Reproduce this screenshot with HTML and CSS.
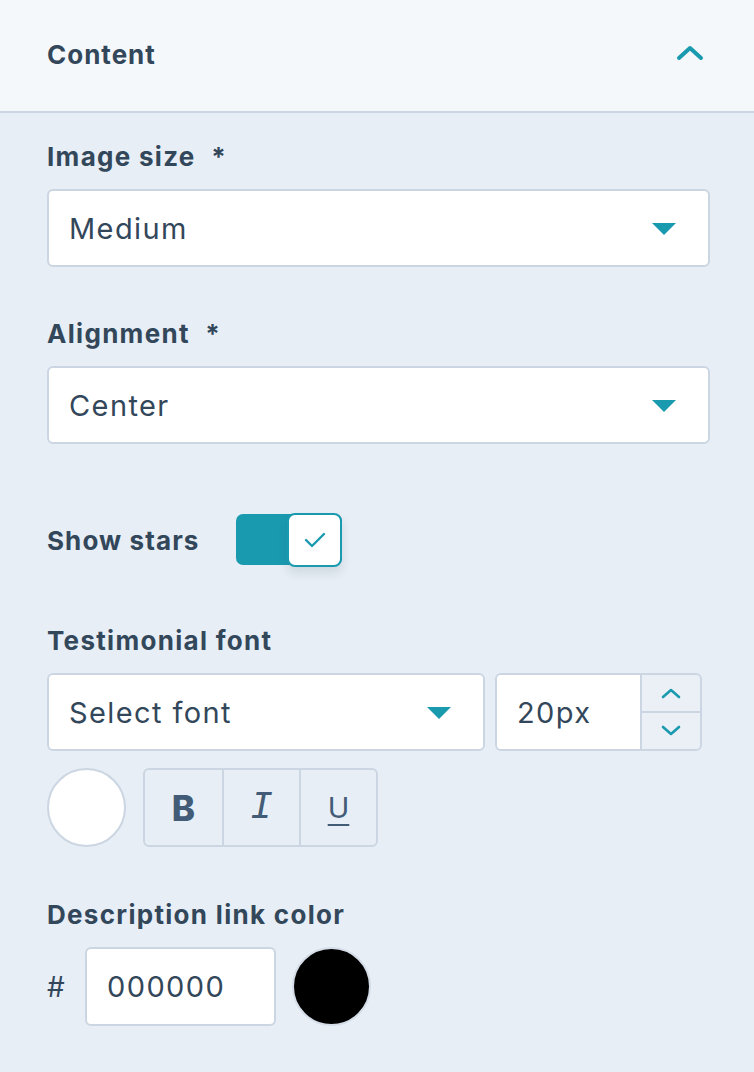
FILE: index.html
```html
<!DOCTYPE html>
<html lang="en">
<head>
<meta charset="utf-8">
<title>Content</title>
<link rel="stylesheet" href="styles.css">
</head>
<body>
<section class="panel">
  <header class="panel-head">
    <h2 class="panel-title">Content</h2>
    <svg class="chev-up" width="28" height="16" viewBox="0 0 28 16"><path d="M3 13 L14 3 L25 13" fill="none" stroke="#1a9aaf" stroke-width="4" stroke-linecap="round" stroke-linejoin="round"/></svg>
  </header>

  <div class="panel-body">
    <div class="field f-size">
      <label class="label">Image size <span class="req">*</span></label>
      <div class="select">
        <span class="select-value">Medium</span>
        <span class="caret"></span>
      </div>
    </div>

    <div class="field f-align">
      <label class="label">Alignment <span class="req">*</span></label>
      <div class="select">
        <span class="select-value">Center</span>
        <span class="caret"></span>
      </div>
    </div>

    <div class="toggle-row">
      <span class="label">Show stars</span>
      <div class="toggle">
        <span class="toggle-knob">
          <svg width="24" height="18" viewBox="0 0 24 18"><path d="M3 9 L9 15 L21 3" fill="none" stroke="#1a9aaf" stroke-width="2.4" stroke-linecap="round" stroke-linejoin="round"/></svg>
        </span>
      </div>
    </div>

    <div class="field f-font">
      <label class="label">Testimonial font</label>
      <div class="font-row">
        <div class="select font-select">
          <span class="select-value">Select font</span>
          <span class="caret"></span>
        </div>
        <div class="number">
          <span class="number-value">20px</span>
          <div class="stepper">
            <span class="step">
              <svg width="22" height="12" viewBox="0 0 22 12"><path d="M3 10 L11 3 L19 10" fill="none" stroke="#1a9aaf" stroke-width="2.6" stroke-linecap="round" stroke-linejoin="round"/></svg>
            </span>
            <span class="step">
              <svg width="22" height="12" viewBox="0 0 22 12"><path d="M3 2 L11 9 L19 2" fill="none" stroke="#1a9aaf" stroke-width="2.6" stroke-linecap="round" stroke-linejoin="round"/></svg>
            </span>
          </div>
        </div>
      </div>
      <div class="style-row">
        <span class="swatch swatch-white"></span>
        <div class="btn-group">
          <span class="btn btn-bold">B</span>
          <span class="btn btn-italic">I</span>
          <span class="btn btn-under">U</span>
        </div>
      </div>
    </div>

    <div class="field f-link">
      <label class="label">Description link color</label>
      <div class="hex-row">
        <span class="hash">#</span>
        <div class="hex-input">000000</div>
        <span class="swatch swatch-black"></span>
      </div>
    </div>
  </div>
</section>
</body>
</html>
```

FILE: styles.css
```css
* { box-sizing: border-box; }

html, body {
  margin: 0;
  padding: 0;
}

body {
  width: 754px;
  height: 1072px;
  background: #e7eef5;
  font-family: "Inter", "Open Sans", sans-serif;
  color: #33475b;
  overflow: hidden;
}

.panel-head {
  height: 113px;
  background: #f5f8fa;
  border-bottom: 2px solid #cbd6e2;
  display: flex;
  align-items: center;
  justify-content: space-between;
  padding: 0 50px 0 47px;
}

.panel-title {
  margin: 0;
  font-size: 26px;
  font-weight: 700;
  letter-spacing: 1px;
  line-height: 1;
  padding-bottom: 2px;
}

.chev-up { margin-bottom: 6px; }

.panel-body {
  padding: 0 44px 0 47px;
}

.label {
  display: block;
  font-size: 26px;
  font-weight: 700;
  letter-spacing: 1.3px;
  line-height: 34px;
  color: #33475b;
}

.req { margin-left: 8px; }

.field .label { margin-bottom: 15px; }

.f-size { padding-top: 27px; }
.f-align { padding-top: 50px; }
.f-font { padding-top: 58px; }
.f-link { padding-top: 51px; }

.select {
  height: 78px;
  background: #fff;
  border: 2px solid #cbd6e2;
  border-radius: 6px;
  display: flex;
  align-items: center;
  justify-content: space-between;
  padding: 0 32px 0 20px;
}

.select-value {
  font-size: 29px;
  font-weight: 400;
  letter-spacing: 1.4px;
  color: #33475b;
}

.caret {
  width: 0;
  height: 0;
  border-left: 12px solid transparent;
  border-right: 12px solid transparent;
  border-top: 12px solid #1a9aaf;
  margin-top: 2px;
}

.toggle-row {
  display: flex;
  align-items: center;
  margin-top: 68px;
  height: 54px;
}

.toggle-row .label { width: 189px; margin-top: 4px; letter-spacing: 1.1px; }

.toggle {
  width: 106px;
  height: 51px;
  background: #1a9aaf;
  border-radius: 7px;
  position: relative;
  margin-top: 1px;
}

.toggle-knob {
  position: absolute;
  right: 0;
  top: -1px;
  width: 55px;
  height: 54px;
  background: #fff;
  border: 2px solid #1a9aaf;
  border-radius: 8px;
  display: flex;
  align-items: center;
  justify-content: center;
  box-shadow: 0 6px 10px rgba(45, 62, 80, 0.12);
}

.font-row {
  display: flex;
  gap: 10px;
}

.font-select {
  width: 438px;
  padding-right: 32px;
}

.number {
  width: 207px;
  height: 78px;
  border: 2px solid #cbd6e2;
  border-radius: 6px;
  display: flex;
  overflow: hidden;
}

.number-value {
  flex: 1;
  background: #fff;
  font-size: 29px;
  letter-spacing: 1.4px;
  display: flex;
  align-items: center;
  padding-left: 20px;
}

.stepper {
  width: 60px;
  display: flex;
  flex-direction: column;
  border-left: 2px solid #cbd6e2;
  background: #eaf0f6;
}

.step {
  flex: 1;
  display: flex;
  align-items: center;
  justify-content: center;
}

.step + .step { border-top: 2px solid #cbd6e2; }

.style-row {
  display: flex;
  align-items: center;
  gap: 17px;
  margin-top: 17px;
}

.swatch {
  width: 79px;
  height: 79px;
  border-radius: 50%;
  border: 2px solid #cbd6e2;
  flex: none;
}

.swatch-white { background: #fff; }
.swatch-black { background: #000; border-color: #d5dee8; }

.btn-group {
  display: flex;
  height: 79px;
  border: 2px solid #cbd6e2;
  border-radius: 6px;
  overflow: hidden;
}

.btn {
  width: 77px;
  display: flex;
  align-items: center;
  justify-content: center;
  color: #425b76;
  font-size: 35px;
}

.btn + .btn { border-left: 2px solid #cbd6e2; }

.btn-bold { font-weight: 800; }

.btn-italic {
  font-family: "Liberation Mono", monospace;
  font-style: italic;
  font-weight: 400;
  font-size: 38px;
}

.btn-under {
  font-family: "Inter", sans-serif;
  font-weight: 400;
  text-decoration: underline;
  text-underline-offset: 6px;
  text-decoration-thickness: 2px;
  font-size: 29px;
}

.hex-row {
  display: flex;
  align-items: center;
}

.hash {
  font-size: 28px;
  width: 38px;
}

.hex-input {
  width: 191px;
  height: 79px;
  background: #fff;
  border: 2px solid #cbd6e2;
  border-radius: 6px;
  font-size: 29px;
  letter-spacing: 1.4px;
  display: flex;
  align-items: center;
  padding-left: 20px;
  margin-right: 16px;
}
```
